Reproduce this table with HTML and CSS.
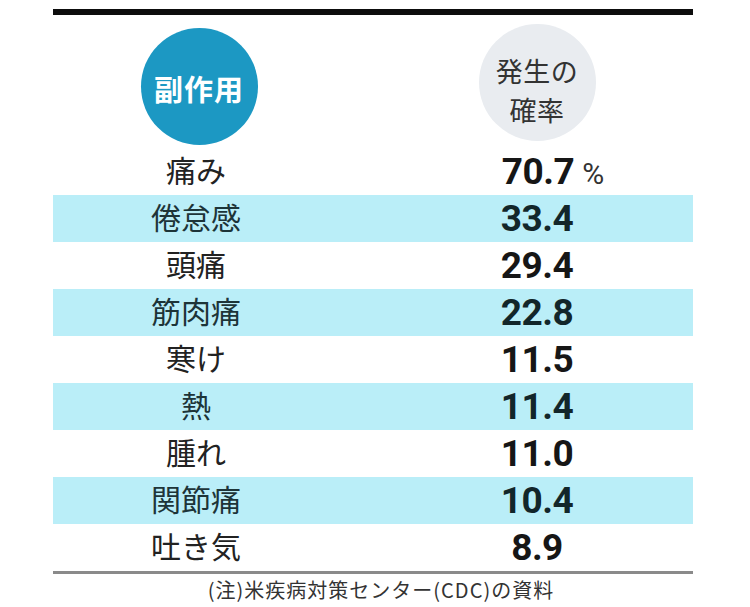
FILE: index.html
```html
<!DOCTYPE html>
<html lang="ja">
<head>
<meta charset="utf-8">
<title>副作用と発生の確率</title>
<link rel="stylesheet" href="styles.css">
</head>
<body>
<div class="chart">
  <div class="topbar"></div>
  <div class="header">
    <div class="cell-left"><div class="badge badge-blue">副作用</div></div>
    <div class="cell-right"><div class="badge badge-gray"><span class="line">発生の</span><span class="line">確率</span></div></div>
  </div>
  <div class="rows">
    <div class="row"><div class="label">痛み</div><div class="value"><span class="num">70.7</span><span class="pct">%</span></div></div>
    <div class="row alt"><div class="label">倦怠感</div><div class="value"><span class="num">33.4</span></div></div>
    <div class="row"><div class="label">頭痛</div><div class="value"><span class="num">29.4</span></div></div>
    <div class="row alt"><div class="label">筋肉痛</div><div class="value"><span class="num">22.8</span></div></div>
    <div class="row"><div class="label">寒け</div><div class="value"><span class="num">11.5</span></div></div>
    <div class="row alt"><div class="label">熱</div><div class="value"><span class="num">11.4</span></div></div>
    <div class="row"><div class="label">腫れ</div><div class="value"><span class="num">11.0</span></div></div>
    <div class="row alt"><div class="label">関節痛</div><div class="value"><span class="num">10.4</span></div></div>
    <div class="row"><div class="label">吐き気</div><div class="value"><span class="num">8.9</span></div></div>
  </div>
  <div class="note">(注)米疾病対策センター(CDC)の資料</div>
</div>
</body>
</html>
```
FILE: styles.css
```css
html, body {
  margin: 0;
  padding: 0;
  background: #ffffff;
}
body {
  font-family: "Noto Sans CJK JP", "Noto Sans", sans-serif;
  color: #222222;
}
.chart {
  width: 640px;
  margin-left: 53px;
  padding-top: 9px;
}
.topbar {
  height: 6px;
  background: #0d0d0d;
}
.header {
  display: grid;
  grid-template-columns: 292px 1fr;
  height: 133px;
  align-items: start;
}
.cell-left {
  display: flex;
  justify-content: center;
  padding-top: 13px;
}
.cell-right {
  display: flex;
  justify-content: center;
  padding-left: 36px;
  padding-top: 9px;
}
.badge {
  width: 117px;
  height: 117px;
  border-radius: 50%;
  display: flex;
  align-items: center;
  justify-content: center;
  text-align: center;
  box-sizing: border-box;
}
.badge-blue {
  background: #1c98c3;
  color: #ffffff;
  font-weight: 700;
  font-size: 29px;
  letter-spacing: 1px;
  padding-top: 2px;
}
.badge-gray {
  background: #e9ecf0;
  color: #333333;
  font-size: 27px;
  flex-direction: column;
  padding-top: 15px;
}
.badge-gray .line {
  display: block;
  height: 39px;
  line-height: 39px;
  letter-spacing: 0.5px;
}
.rows {
  border-bottom: 3px solid #8a8a8a;
}
.row {
  display: grid;
  grid-template-columns: 286px 1fr;
  height: 47px;
  align-items: center;
}
.row.alt {
  background: #baeef8;
}
.label {
  align-self: start;
  text-align: center;
  font-size: 30px;
  line-height: 42px;
  color: #222222;
}
.row.alt .label {
  color: #1d3438;
}
.value {
  text-align: center;
  padding-left: 42px;
  line-height: 47px;
  white-space: nowrap;
}
.num {
  font-family: Roboto, "Liberation Sans", sans-serif;
  font-weight: 700;
  font-size: 37px;
  color: #161616;
  letter-spacing: -0.5px;
}
.row.alt .num {
  color: #12262a;
}
.pct {
  font-family: Roboto, "Liberation Sans", sans-serif;
  font-weight: 400;
  font-size: 30px;
  color: #333333;
  margin-left: 8px;
  margin-right: -32px;
}
.note {
  text-align: center;
  padding-left: 16px;
  padding-top: 4px;
  font-size: 20px;
  letter-spacing: 1px;
  line-height: 24px;
  color: #333333;
}
```
